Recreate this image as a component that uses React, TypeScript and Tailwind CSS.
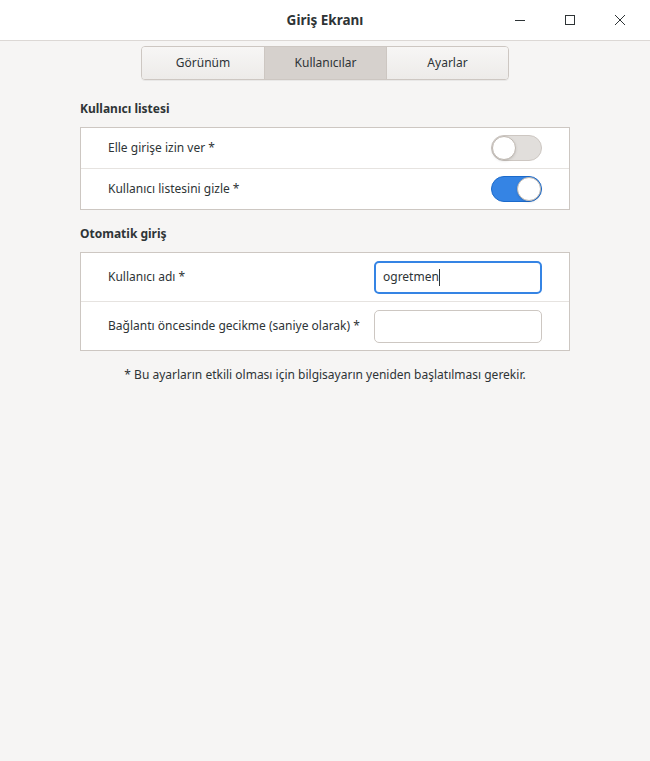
import { useState } from "react";

function Toggle({ on }: { on: boolean }) {
  return (
    <div
      className={`w-[51px] h-[26px] shrink-0 rounded-full border flex items-center ${
        on ? "bg-[#3584e4] border-[#1b6acb] justify-end" : "bg-[#e1dedb] border-[#cdc7c2] justify-start"
      }`}
    >
      <div className="w-[24px] h-[24px] rounded-full bg-white border border-[#bfb8b1] shadow-sm" />
    </div>
  );
}

export default function App() {
  const [tab] = useState(1);
  const tabs = ["Görünüm", "Kullanıcılar", "Ayarlar"];

  return (
    <div
      className="w-[650px] h-[761px] bg-[#f6f5f4] text-[#2e3436] flex flex-col text-[12px]"
      style={{ fontFamily: '"Noto Sans", "DejaVu Sans", sans-serif' }}
    >
      {/* Title bar */}
      <div className="h-[41px] bg-white border-b border-[#dcd8d5] flex items-center relative">
        <div className="flex-1 text-center font-bold text-[13.5px] text-[#2e3436]">Giriş Ekranı</div>
        <div className="absolute right-[5px] top-0 h-[40px] flex items-center">
          <div className="w-[50px] flex justify-center">
            <svg width="12" height="12" viewBox="0 0 12 12">
              <path d="M1 6.5h10" stroke="#2e3436" strokeWidth="1" />
            </svg>
          </div>
          <div className="w-[50px] flex justify-center">
            <svg width="12" height="12" viewBox="0 0 12 12">
              <rect x="1.5" y="1.5" width="9" height="9" fill="none" stroke="#2e3436" strokeWidth="1" />
            </svg>
          </div>
          <div className="w-[50px] flex justify-center">
            <svg width="12" height="12" viewBox="0 0 12 12">
              <path d="M1 1l10 10M11 1L1 11" stroke="#2e3436" strokeWidth="1" />
            </svg>
          </div>
        </div>
      </div>

      {/* Tabs */}
      <div className="flex justify-center pt-[5px]">
        <div className="flex border border-[#cdc7c2] rounded-[4px] overflow-hidden shadow-[0_1px_0_rgba(0,0,0,0.05)]">
          {tabs.map((t, i) => (
            <div
              key={t}
              className={`w-[122px] h-[32px] flex items-center justify-center text-[#2e3436] ${
                i > 0 ? "border-l border-[#cdc7c2]" : ""
              } ${i === tab ? "bg-[#d6d1cd]" : "bg-gradient-to-b from-[#f7f6f5] to-[#edebe9]"}`}
            >
              {t}
            </div>
          ))}
        </div>
      </div>

      <div className="px-[80px] pt-[19px]">
        {/* Kullanıcı listesi */}
        <div className="font-bold h-[20px] leading-[20px]">Kullanıcı listesi</div>
        <div className="mt-[8px] bg-white border border-[#cdc7c2]">
          <div className="h-[41px] flex items-center justify-between pl-[27px] pr-[27px] border-b border-[#e6e3e0]">
            <span>Elle girişe izin ver *</span>
            <Toggle on={false} />
          </div>
          <div className="h-[40px] flex items-center justify-between pl-[27px] pr-[27px]">
            <span>Kullanıcı listesini gizle *</span>
            <Toggle on={true} />
          </div>
        </div>

        {/* Otomatik giriş */}
        <div className="font-bold h-[20px] leading-[20px] mt-[14px]">Otomatik giriş</div>
        <div className="mt-[8px] bg-white border border-[#cdc7c2]">
          <div className="h-[49px] flex items-center justify-between pl-[27px] pr-[27px] border-b border-[#e6e3e0]">
            <span className="whitespace-nowrap">Kullanıcı adı *</span>
            <div className="w-[168px] h-[33px] shrink-0 rounded-[5px] border-2 border-[#3584e4] flex items-center px-[7px]">
              <span>ogretmen</span>
              <span className="w-px h-[17px] bg-[#2e3436]" />
            </div>
          </div>
          <div className="h-[48px] flex items-center justify-between pl-[27px] pr-[27px]">
            <span className="whitespace-nowrap">Bağlantı öncesinde gecikme (saniye olarak) *</span>
            <div className="w-[168px] h-[33px] shrink-0 rounded-[5px] border border-[#cdc7c2] bg-white" />
          </div>
        </div>

        <div className="text-center mt-[15px]">* Bu ayarların etkili olması için bilgisayarın yeniden başlatılması gerekir.</div>
      </div>
    </div>
  );
}
